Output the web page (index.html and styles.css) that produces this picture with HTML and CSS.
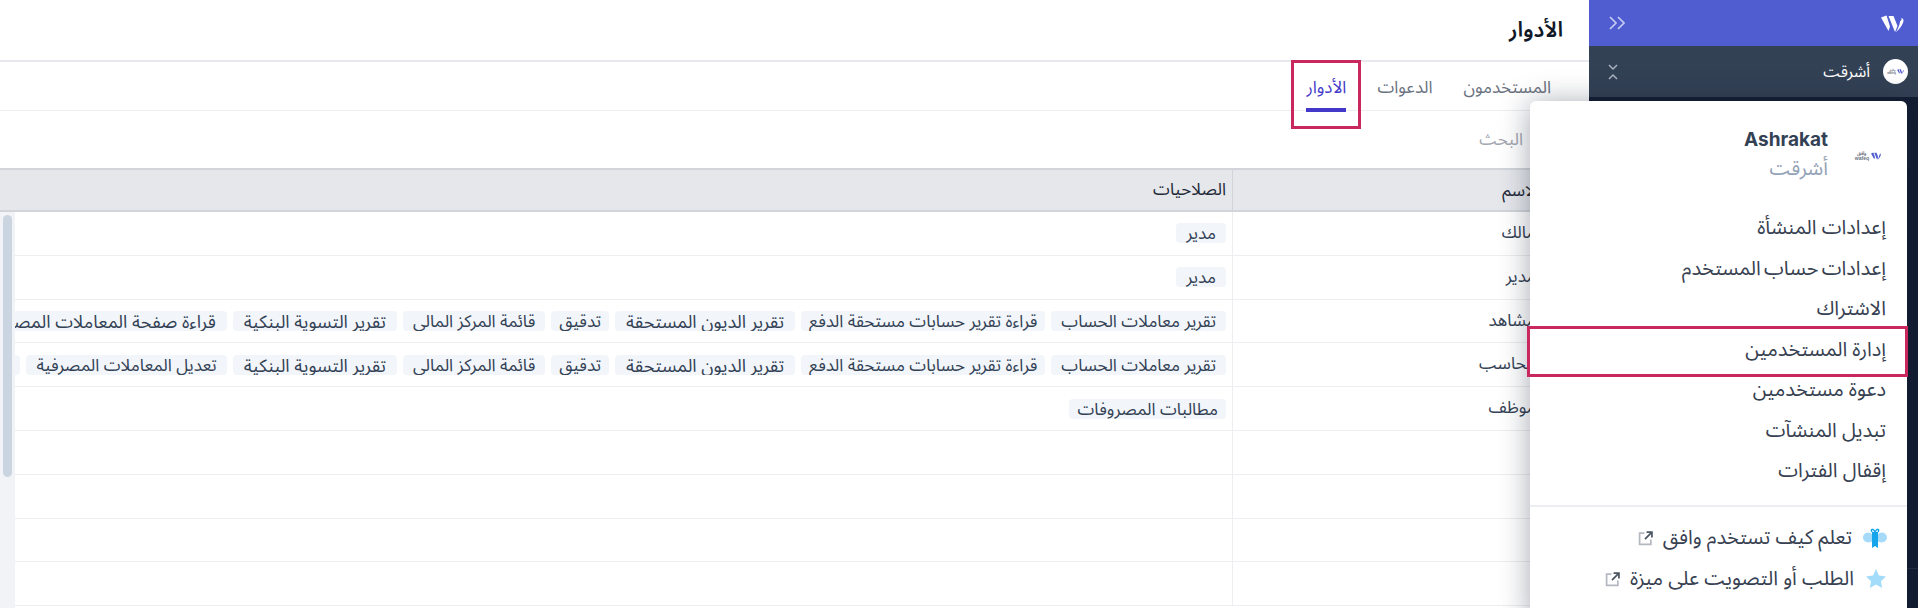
FILE: index.html
```html
<!DOCTYPE html>
<html lang="ar" dir="rtl">
<head>
<meta charset="utf-8">
<title>الأدوار</title>
<link rel="stylesheet" href="styles.css">
</head>
<body>
<div class="app">
  <aside class="sidebar">
    <div class="brand">
      <svg class="brand-logo" viewBox="0 0 23 17"><path d="M0 2.500 5.500.5 9 11.500 7.500 16Z"/><path d="M7.500 1h5l4 10-2.500 6Z"/><path d="M15 17c4-3 7-8 7.500-11 .2-2-1-3-2.500-3 1.500 1 0 2.500-1 3.500 0 3-2 7-4 10.500Z"/></svg>
      <svg class="collapse" viewBox="0 0 16 14"><path d="M1 1l6 6-6 6M9 1l6 6-6 6"/></svg>
    </div>
    <div class="org">
      <span class="avatar"><svg class="mini-w" viewBox="0 0 23 17"><path d="M0 2.500 5.500.5 9 11.500 7.500 16Z"/><path d="M7.500 1h5l4 10-2.500 6Z"/><path d="M15 17c4-3 7-8 7.500-11 .2-2-1-3-2.500-3 1.500 1 0 2.500-1 3.500 0 3-2 7-4 10.500Z"/></svg><span class="mini-word">وافق<br>wafeq</span></span>
      <span class="org-name">أشرقت</span>
      <svg class="updown" viewBox="0 0 10 16"><path d="M1 1l4 4 4-4M1 15l4-4 4 4"/></svg>
    </div>
    <div class="side-rest"><div class="side-pill"></div><div class="side-line"></div></div>
  </aside>

  <main class="main">
    <h1 class="title">الأدوار</h1>
    <nav class="tabs">
      <a class="tab">المستخدمون</a>
      <a class="tab">الدعوات</a>
      <a class="tab tab-active">الأدوار</a>
    </nav>
    <div class="search">البحث</div>
    <div class="table">
      <div class="row head"><div class="c-name">الاسم</div><div class="c-perm">الصلاحيات</div></div>
      <div class="row"><div class="c-name">المالك</div><div class="c-perm"><span class="chip chip-pad">مدير</span></div></div>
      <div class="row"><div class="c-name">المدير</div><div class="c-perm"><span class="chip chip-pad">مدير</span></div></div>
      <div class="row"><div class="c-name">المشاهد</div><div class="c-perm"><span class="chip chip-pad">تقرير معاملات الحساب</span><span class="chip">قراءة تقرير حسابات مستحقة الدفع</span><span class="chip chip-wide">تقرير الديون المستحقة</span><span class="chip">تدقيق</span><span class="chip chip-pad">قائمة المركز المالى</span><span class="chip chip-wide">تقرير التسوية البنكية</span><span class="chip chip-wide">قراءة صفحة المعاملات المصرفية</span></div></div>
      <div class="row"><div class="c-name">المحاسب</div><div class="c-perm"><span class="chip chip-pad">تقرير معاملات الحساب</span><span class="chip">قراءة تقرير حسابات مستحقة الدفع</span><span class="chip chip-wide">تقرير الديون المستحقة</span><span class="chip">تدقيق</span><span class="chip chip-pad">قائمة المركز المالى</span><span class="chip chip-wide">تقرير التسوية البنكية</span><span class="chip chip-pad">تعديل المعاملات المصرفية</span><span class="chip">قراءة</span></div></div>
      <div class="row"><div class="c-name">الموظف</div><div class="c-perm"><span class="chip">مطالبات المصروفات</span></div></div>
      <div class="row"><div class="c-name"></div><div class="c-perm"></div></div>
      <div class="row"><div class="c-name"></div><div class="c-perm"></div></div>
      <div class="row"><div class="c-name"></div><div class="c-perm"></div></div>
      <div class="row"><div class="c-name"></div><div class="c-perm"></div></div>
      <div class="scrollbar"><div class="thumb"></div></div>
    </div>
  </main>
</div>

<div class="menu">
  <div class="menu-head">
    <span class="head-logo"><svg class="head-w" viewBox="0 0 23 17"><path d="M0 2.500 5.500.5 9 11.500 7.500 16Z"/><path d="M7.500 1h5l4 10-2.500 6Z"/><path d="M15 17c4-3 7-8 7.500-11 .2-2-1-3-2.500-3 1.500 1 0 2.500-1 3.500 0 3-2 7-4 10.500Z"/></svg><span class="head-word">وافق<br>wafeq</span></span>
    <div class="head-names"><div class="name-en" dir="ltr">Ashrakat</div><div class="name-ar">أشرقت</div></div>
  </div>
  <ul class="menu-list">
    <li>إعدادات المنشأة</li>
    <li class="tight">إعدادات حساب المستخدم</li>
    <li>الاشتراك</li>
    <li class="marked">إدارة المستخدمين</li>
    <li>دعوة مستخدمين</li>
    <li>تبديل المنشآت</li>
    <li>إقفال الفترات</li>
  </ul>
  <div class="menu-links">
    <div class="link">
      <svg class="link-icon" viewBox="0 0 24 20"><path fill="#a5dbf9" d="M10 7C6 3 1 4 0 9c0 5 5 7 10 4ZM14 7c4-4 9-3 10 2 0 5-5 7-10 4Z"/><path fill="#16a5ea" d="M9 4h6v16l-3-2-3 2Z"/><path fill="none" stroke="#16a5ea" stroke-width="1.5" d="M12 4C10 0 7 1 9 4M12 4c2-4 5-3 3 0"/></svg>
      <span>تعلم كيف تستخدم وافق</span>
      <svg class="ext" viewBox="0 0 14 14"><path d="M6 2H1.500v10.500H12V8"/><path class="ext-arrow" d="M8 1h5v5M13 1 6.500 7.500"/></svg>
    </div>
    <div class="link">
      <svg class="link-icon star" viewBox="0 0 20 20"><path fill="#a3dcfb" d="m10 0 3 6.500 7 .9-5.100 4.800L16.200 19 10 15.600 3.800 19l1.300-6.800L0 7.400l7-.9Z"/></svg>
      <span>الطلب أو التصويت على ميزة</span>
      <svg class="ext" viewBox="0 0 14 14"><path d="M6 2H1.500v10.500H12V8"/><path class="ext-arrow" d="M8 1h5v5M13 1 6.500 7.500"/></svg>
    </div>
  </div>
</div>
</body>
</html>
```

FILE: styles.css
```css
* { box-sizing: border-box; }
html, body { margin: 0; padding: 0; height: 608px; overflow: hidden; background: #fff; }
body { font-family: "Noto Sans", "Noto Sans Arabic", "DejaVu Sans", sans-serif; font-size: 17px; color: #334155; }
.app { display: flex; height: 608px; }

.sidebar { flex: 0 0 329px; display: flex; flex-direction: column; background: #141e33; }
.brand { flex: none; height: 46px; background: #505dd0; display: flex; align-items: center; justify-content: space-between; padding: 0 14px 0 20px; }
.brand-logo { width: 23px; height: 17px; fill: #fff; }
.collapse { width: 16px; height: 14px; fill: none; stroke: #c5cbf0; stroke-width: 1.7; }
.org { flex: none; height: 51px; background: #334155; display: flex; align-items: center; padding-right: 10px; color: #fff; }
.avatar { width: 25px; height: 25px; border-radius: 50%; background: #fff; display: flex; align-items: center; justify-content: center; gap: 1px; }
.mini-w { width: 7px; height: 5px; fill: #4f5bd0; flex: none; }
.mini-word { font: 700 3px/3px "Liberation Sans", sans-serif; color: #6b7280; text-align: center; }
.org-name { margin-right: 13px; font-size: 16px; }
.updown { width: 10px; height: 16px; margin-right: auto; margin-left: 19px; fill: none; stroke: #aab2c0; stroke-width: 1.5; }
.side-rest { flex: 1; }
.side-pill { height: 42px; margin: 31px 8px 0 0; width: 20px; border-radius: 6px; background: #182338; }
.side-line { margin-top: 398px; border-top: 1px solid #263147; }

.main { flex: 1; min-width: 0; display: flex; flex-direction: column; }
.title { flex: none; margin: 0; height: 62px; padding: 0 26px 0 0; font-size: 21.500px; font-weight: 600; line-height: 57px; color: #111827; border-bottom: 2px solid #e8e9ee; }
.tabs { flex: none; display: flex; height: 49px; padding-right: 38px; gap: 31px; border-bottom: 1px solid #eceef1; }
.tab { position: relative; font-size: 17px; line-height: 50px; color: #6b7280; height: 50px; }
.tab-active { color: #4338ca; border-bottom: 4px solid #4338ca; height: 50px; line-height: 50px; }
.tab-active::after { content: ""; position: absolute; inset: -2px -15px -21px -15px; border: 3px solid #c9285f; }
.search { flex: none; height: 57px; padding-right: 66px; line-height: 56px; font-size: 17px; color: #a3a7af; }

.table { position: relative; flex: 1; border-top: 2px solid #d1d5db; }
.row { display: flex; height: 43.800px; border-bottom: 1px solid #eceef1; }
.head { height: 42px; background: #e5e7eb; border-bottom: 2px solid #d1d5db; color: #1f2937; }
.c-name { flex: 0 0 357px; padding-right: 44px; line-height: 40px; border-left: 1px solid #eceef1; }
.head .c-name { padding-right: 50px; border-left-color: #d1d5db; }
.c-perm { flex: 1; min-width: 0; display: flex; gap: 6px; align-items: center; padding-right: 6px; overflow: hidden; }
.chip { flex: none; height: 20px; line-height: 20px; padding: 0 8px; border-radius: 4px; background: #f2f6fa; white-space: nowrap; overflow: hidden; }
.chip-pad { padding: 0 10px; }
.chip-wide { padding: 0 11px; font-size: 18px; }
.scrollbar { position: absolute; left: 0; top: 42px; bottom: 0; width: 15px; background: #f1f3f6; }
.thumb { position: absolute; left: 3px; top: 3px; width: 9px; height: 262px; border-radius: 5px; background: #cbd5e1; }

.menu { position: absolute; left: 1530px; top: 101px; width: 377px; height: 520px; background: #fff; border-radius: 6px; box-shadow: 0 2px 30px rgba(15, 23, 42, .38); }
.menu-head { display: flex; align-items: center; height: 110px; padding-right: 26px; }
.head-logo { width: 28px; display: flex; align-items: center; gap: 2px; }
.head-w { width: 10px; height: 8px; fill: #4f5bd0; flex: none; }
.head-word { font: 700 5px/5px "Liberation Sans", sans-serif; color: #6b7280; text-align: center; }
.head-names { margin-right: 25px; text-align: right; }
.name-en { font: 700 19px/24px Inter, sans-serif; color: #334155; }
.name-ar { font-size: 20px; line-height: 32px; color: #94a3b8; }
.menu-list { list-style: none; margin: -4px 0 0; padding: 0 0 14px; border-bottom: 2px solid #eceef1; }
.menu-list li { height: 40.500px; padding-right: 21px; font-size: 20px; line-height: 40px; color: #374151; }
.menu-list .tight { word-spacing: -2px; }
.marked { position: relative; }
.marked::after { content: ""; position: absolute; inset: -3px -1px -8px -3px; border: 3px solid #c9285f; }
.menu-links { padding: 11px 20px 0 0; }
.link { display: flex; align-items: center; height: 41px; font-size: 20px; color: #374151; }
.link-icon { flex: none; width: 24px; height: 20px; margin-left: 11px; }
.star { width: 20px; margin-left: 12px; margin-right: 1px; }
.ext { flex: none; width: 15px; height: 15px; margin-right: 10px; fill: none; stroke: #b4b8c0; stroke-width: 1.6; }
.ext-arrow { stroke: #4b5563; }
```
